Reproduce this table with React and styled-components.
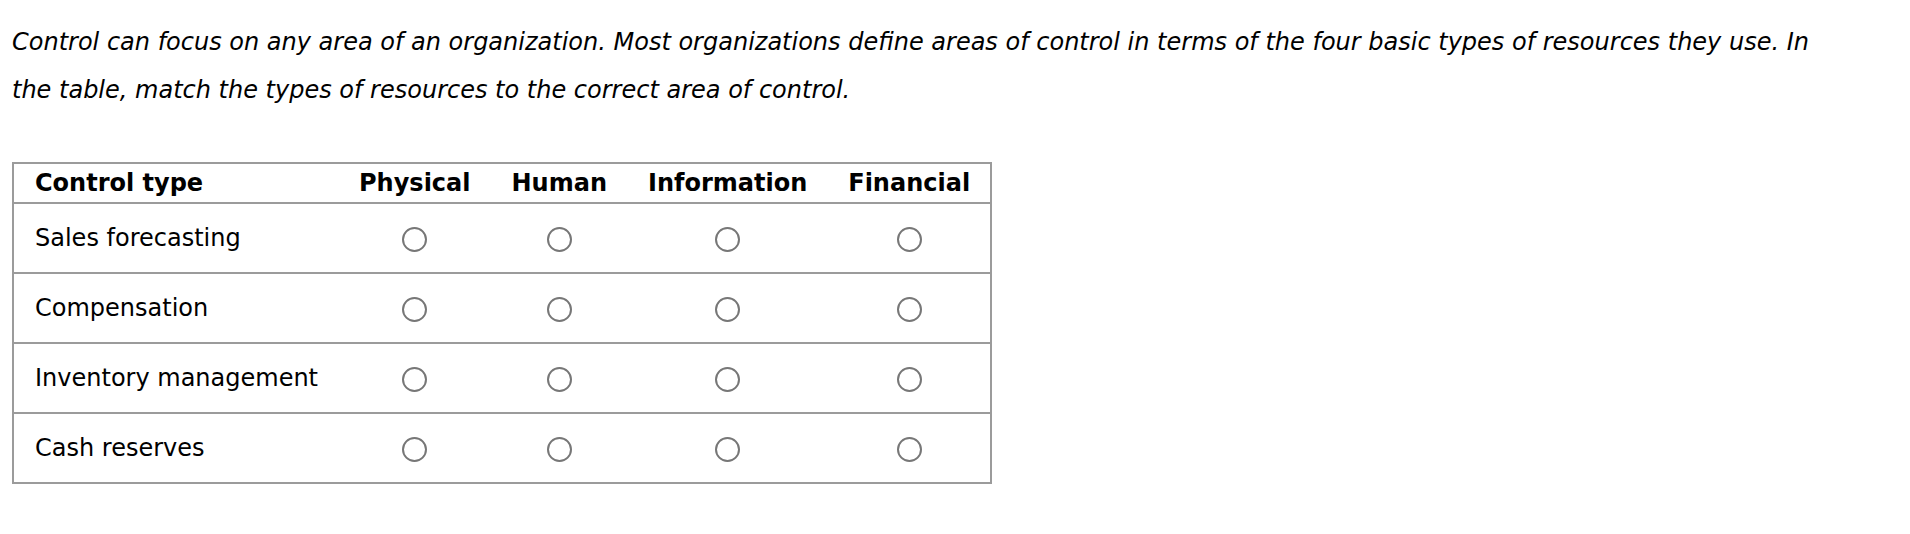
import styled, { createGlobalStyle } from "styled-components";

const GlobalStyle = createGlobalStyle`
  html, body {
    margin: 0;
    padding: 0;
    background: #fff;
  }
  body {
    font-family: "DejaVu Sans", Verdana, sans-serif;
    color: #000;
  }
`;

const Page = styled.div`
  padding: 18px 12px 40px 12px;
`;

const Prompt = styled.p`
  margin: 0 0 48px 0;
  width: 1820px;
  font-size: 24px;
  font-style: italic;
  line-height: 48px;
`;

const Table = styled.table`
  border-collapse: collapse;
  border: 2px solid #9b9b9b;
  font-size: 24px;
`;

const HeadCell = styled.th`
  height: 38px;
  padding: 0 20px 0 21px;
  font-weight: bold;
  text-align: ${(p) => (p.$left ? "left" : "center")};
  white-space: nowrap;
  border-bottom: 2px solid #9b9b9b;
`;

const Row = styled.tr`
  &:not(:last-of-type) td {
    border-bottom: 2px solid #9b9b9b;
  }
`;

const Cell = styled.td`
  height: 68px;
  padding: 0 20px 0 21px;
  text-align: ${(p) => (p.$left ? "left" : "center")};
  vertical-align: middle;
  white-space: nowrap;
`;

const Radio = styled.input.attrs({ type: "radio" })`
  appearance: none;
  -webkit-appearance: none;
  display: inline-block;
  width: 25px;
  height: 25px;
  margin: 0;
  vertical-align: middle;
  border: 2px solid #777;
  border-radius: 50%;
  background: #fff;
  cursor: pointer;

  &:checked {
    background: radial-gradient(circle, #333 0 5px, #fff 6px);
  }
`;

const columns = ["Physical", "Human", "Information", "Financial"];
const controls = [
  "Sales forecasting",
  "Compensation",
  "Inventory management",
  "Cash reserves",
];

export default function App() {
  return (
    <Page>
      <GlobalStyle />
      <Prompt>
        Control can focus on any area of an organization. Most organizations
        define areas of control in terms of the four basic types of resources
        they use. In the table, match the types of resources to the correct
        area of control.
      </Prompt>
      <Table>
        <thead>
          <tr>
            <HeadCell $left>Control type</HeadCell>
            {columns.map((c) => (
              <HeadCell key={c}>{c}</HeadCell>
            ))}
          </tr>
        </thead>
        <tbody>
          {controls.map((row, i) => (
            <Row key={row}>
              <Cell $left>{row}</Cell>
              {columns.map((c) => (
                <Cell key={c}>
                  <Radio name={`control-${i}`} aria-label={`${row} ${c}`} />
                </Cell>
              ))}
            </Row>
          ))}
        </tbody>
      </Table>
    </Page>
  );
}
